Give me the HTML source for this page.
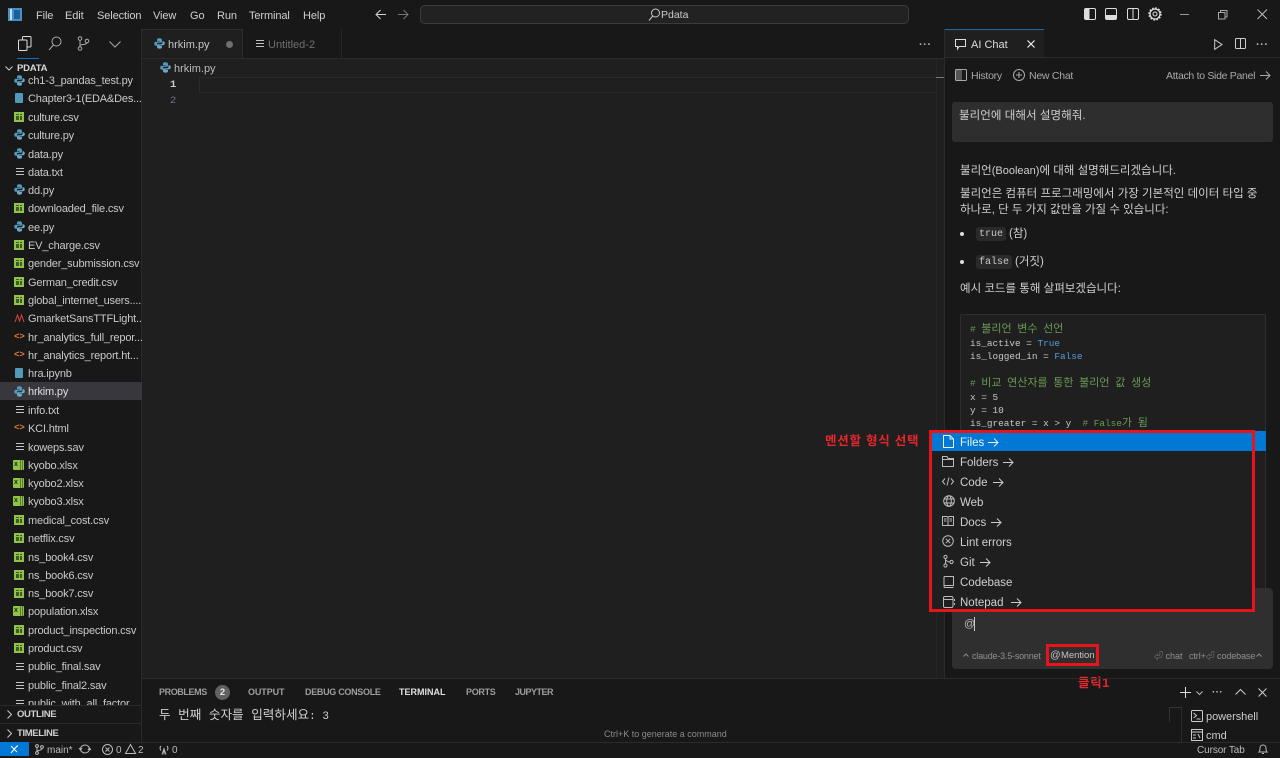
<!DOCTYPE html>
<html><head><meta charset="utf-8">
<style>
*{box-sizing:border-box}
html,body{margin:0;padding:0;width:1280px;height:756px;overflow:hidden;background:#181818;font-family:"Liberation Sans","Noto Sans CJK KR",sans-serif;color:#ccc;font-size:11px}
.a{position:absolute;white-space:nowrap;line-height:14px}
.b{position:absolute}
svg{position:absolute;overflow:visible;fill:none;stroke:#c8c8c8;stroke-width:1}
.f{position:absolute;left:28px;width:114px;font-size:11px;line-height:14px;color:#c9c9c9;white-space:nowrap;overflow:hidden;letter-spacing:-.17px;margin-top:1px}
.i{position:absolute;left:14px;width:11px;height:11px}
svg.pi{stroke:none;left:14px;width:11px;height:11px}
.csv{background:#3f5a22;border:2px solid #8fc34a;background-image:linear-gradient(#8fc34a,#8fc34a),linear-gradient(#8fc34a,#8fc34a);background-size:1px 100%,100% 1px;background-position:3px 0,0 1px;background-repeat:no-repeat;left:14px;width:10px;height:10px}
.txt{left:16px;width:8px;height:8px;background:repeating-linear-gradient(#c4c4c4 0 1px,transparent 1px 3px)}
.nb{left:15px;width:8px;height:10px;background:#519aba;border-radius:1px}
.html{color:#e37933;font:bold 9px "Liberation Mono",monospace;left:14px;line-height:10px;width:12px}
.xl{left:13px;width:11px;height:10px;background:linear-gradient(90deg,#8fc34a 0 7px,#5c7d30 7px 8px,#8fc34a 8px 9px,#5c7d30 9px 10px,#8fc34a 10px);border-radius:1px;color:#1c2a10;font:bold 7px/10px "Liberation Sans";padding-left:1px}
.m{position:absolute;top:9px;font-size:11px;line-height:14px;color:#cfcfcf;letter-spacing:-.1px}
.pn{position:absolute;top:686px;font-size:9px;font-weight:bold;line-height:13px;color:#9d9d9d;letter-spacing:-.25px}
.it{position:absolute;left:960px;font-size:11.5px;line-height:16px;color:#cfcfcf;white-space:nowrap;margin-top:1px}
.ar{position:absolute;width:11px;height:9px}
.code{font-family:"Liberation Mono","Noto Sans CJK KR",monospace;font-size:9.4px;line-height:13.45px;color:#c8c8c8;white-space:pre}
.code u{text-decoration:none;font-size:11px;line-height:0}
.ko{font-size:11.5px;color:#cfcfcf}
.sm{font-size:10.5px;color:#a8a8a8;letter-spacing:-.25px}
.ko small{font-size:11px}
</style></head><body>

<svg width="0" height="0" style="position:absolute"><defs>
<symbol id="py" viewBox="0 0 11 11"><path d="M5.400 .3C3.400 .3 3 1.100 3 2.100V3.300H5.600V3.800H1.900C.8 3.800 .2 4.600 .2 5.700S.8 7.800 1.900 7.800H3V6.300C3 5.400 3.700 4.800 4.500 4.800H6.800C7.600 4.800 8 4.200 8 3.500V2.100C8 1 7.200 .3 5.400 .3Z" fill="#519aba" stroke="none"/><path d="M5.600 10.700C7.600 10.700 8 9.900 8 8.900V7.700H5.400V7.200H9.100C10.200 7.200 10.800 6.400 10.800 5.300S10.200 3.200 9.100 3.200H8.500V4.700C8.500 5.600 7.800 6.200 7 6.200H4.200C3.400 6.200 3 6.800 3 7.500V8.900C3 10 3.800 10.700 5.600 10.700Z" fill="#6aa9c8" stroke="none"/></symbol>
</defs></svg>

<!-- title bar -->
<div class="b" style="left:0;top:0;width:1280px;height:29px;background:#181818"></div>
<div class="b" style="left:8px;top:8px;width:14px;height:13px;background:#4a90c8"></div>
<div class="b" style="left:10px;top:9px;width:2px;height:11px;background:#bfe0f5"></div>
<div class="b" style="left:14px;top:10px;width:6px;height:9px;background:#1d5f96"></div>
<div class="m" style="left:36px">File</div><div class="m" style="left:65px">Edit</div><div class="m" style="left:97px">Selection</div><div class="m" style="left:153px">View</div><div class="m" style="left:190px">Go</div><div class="m" style="left:217px">Run</div><div class="m" style="left:249px">Terminal</div><div class="m" style="left:303px">Help</div>
<svg style="left:375px;top:9px" width="12" height="11"><path d="M1 5.500H11M5.500 1L1 5.500L5.500 10" stroke="#d0d0d0"/></svg>
<svg style="left:397px;top:9px" width="12" height="11"><path d="M1 5.500H11M6.500 1L11 5.500L6.500 10" stroke="#777"/></svg>
<div class="b" style="left:420px;top:5px;width:489px;height:19px;background:#222;border:1px solid #3c3c3c;border-radius:5px"></div>
<svg style="left:648px;top:8px" width="12" height="13"><circle cx="7.500" cy="5" r="4"/><path d="M4.800 8L1 12.500"/></svg>
<div class="a" style="left:661px;top:8px;font-size:10.5px;color:#ccc">Pdata</div>
<svg style="left:1084px;top:8px" width="12" height="12"><rect x=".5" y=".5" width="11" height="11" rx="1.500" stroke="#ddd"/><rect x="1" y="1" width="4.500" height="10" fill="#ddd" stroke="none"/></svg>
<svg style="left:1105px;top:8px" width="12" height="12"><rect x=".5" y=".5" width="11" height="11" rx="1.500" stroke="#ddd"/><rect x="1" y="7" width="10" height="4" fill="#ddd" stroke="none"/></svg>
<svg style="left:1127px;top:8px" width="12" height="12"><path d="M6 1V11" stroke="#ddd"/><rect x=".5" y=".5" width="11" height="11" rx="1.500" stroke="#ddd"/></svg>
<svg style="left:1148px;top:7px" width="14" height="14"><circle cx="7" cy="7" r="2" stroke="#ddd"/><circle cx="7" cy="7" r="5" stroke="#ddd" stroke-width="1.300"/><circle cx="7" cy="7" r="6" stroke="#ddd" stroke-width="1.400" stroke-dasharray="1.600 1.550"/></svg>
<div class="b" style="left:1180px;top:14px;width:9px;height:1px;background:#999"></div>
<svg style="left:1218px;top:10px" width="10" height="10"><rect x=".5" y="2.500" width="6.500" height="6.500" stroke="#aaa"/><path d="M2.500 2.500V.5H9V7H7" stroke="#aaa"/></svg>
<svg style="left:1257px;top:9px" width="11" height="11"><path d="M.5.5L10 10M10 .5L.5 10" stroke="#bbb"/></svg>

<!-- activity / sidebar -->
<div class="b" style="left:0;top:29px;width:142px;height:713px;background:#181818;border-right:1px solid #2a2a2a"></div>
<svg style="left:18px;top:36px" width="14" height="15"><rect x="4.500" y=".5" width="8.500" height="10.500" rx="1" stroke="#ddd"/><rect x=".5" y="4" width="8.500" height="10.500" rx="1" stroke="#ddd" fill="#181818"/></svg>
<svg style="left:48px;top:36px" width="14" height="15"><circle cx="8.500" cy="5.500" r="4.500" stroke="#aaa"/><path d="M5.500 9L1 14" stroke="#aaa"/></svg>
<svg style="left:77px;top:36px" width="13" height="15"><circle cx="3" cy="2.500" r="1.800" stroke="#aaa"/><circle cx="3" cy="12.500" r="1.800" stroke="#aaa"/><circle cx="10" cy="5" r="1.800" stroke="#aaa"/><path d="M3 4.500V10.500M3 9C6 8 9 9 10 7" stroke="#aaa"/></svg>
<svg style="left:109px;top:41px" width="12" height="7"><path d="M.5 .5L6 6L11.500 .5" stroke="#aaa"/></svg>
<div class="b" style="left:17px;top:58px;width:22px;height:1px;background:#0e70c0"></div>
<svg style="left:5px;top:66px" width="8" height="5"><path d="M.5 .5L4 4L7.500 .5" stroke="#ccc"/></svg>

<div class="b" style="left:0;top:75px;width:142px;height:635px;overflow:hidden">
<div class="b" style="left:0;top:307px;width:142px;height:18px;background:#37373d"></div>
<svg class="pi" style="top:0px"><use href="#py"/></svg><div class="f" style="top:-2px">ch1-3_pandas_test.py</div>
<i class="i nb" style="top:18px"></i><div class="f" style="top:16px">Chapter3-1(EDA&amp;Des...</div>
<i class="i csv" style="top:37px"></i><div class="f" style="top:35px">culture.csv</div>
<svg class="pi" style="top:54px"><use href="#py"/></svg><div class="f" style="top:53px">culture.py</div>
<svg class="pi" style="top:73px"><use href="#py"/></svg><div class="f" style="top:72px">data.py</div>
<i class="i txt" style="top:93px"></i><div class="f" style="top:90px">data.txt</div>
<svg class="pi" style="top:109px"><use href="#py"/></svg><div class="f" style="top:108px">dd.py</div>
<i class="i csv" style="top:128px"></i><div class="f" style="top:126px">downloaded_file.csv</div>
<svg class="pi" style="top:146px"><use href="#py"/></svg><div class="f" style="top:145px">ee.py</div>
<i class="i csv" style="top:165px"></i><div class="f" style="top:163px">EV_charge.csv</div>
<i class="i csv" style="top:183px"></i><div class="f" style="top:181px">gender_submission.csv</div>
<i class="i csv" style="top:202px"></i><div class="f" style="top:200px">German_credit.csv</div>
<i class="i csv" style="top:220px"></i><div class="f" style="top:218px">global_internet_users....</div>
<svg style="left:14px;top:238px" width="11" height="10"><path d="M1 9L3.500 2L5.500 8L7.500 2L10 9" stroke="#d9443f"/></svg><div class="f" style="top:236px">GmarketSansTTFLight...</div>
<div class="i html" style="top:257px">&lt;&gt;</div><div class="f" style="top:255px">hr_analytics_full_repor...</div>
<div class="i html" style="top:275px">&lt;&gt;</div><div class="f" style="top:273px">hr_analytics_report.ht...</div>
<i class="i nb" style="top:293px"></i><div class="f" style="top:291px">hra.ipynb</div>
<svg class="pi" style="top:311px"><use href="#py"/></svg><div class="f" style="top:309px;color:#e0e0e0">hrkim.py</div>
<i class="i txt" style="top:331px"></i><div class="f" style="top:328px">info.txt</div>
<div class="i html" style="top:348px">&lt;&gt;</div><div class="f" style="top:346px">KCI.html</div>
<i class="i txt" style="top:368px"></i><div class="f" style="top:365px">koweps.sav</div>
<i class="i xl" style="top:385px">x</i><div class="f" style="top:383px">kyobo.xlsx</div>
<i class="i xl" style="top:403px">x</i><div class="f" style="top:401px">kyobo2.xlsx</div>
<i class="i xl" style="top:421px">x</i><div class="f" style="top:419px">kyobo3.xlsx</div>
<i class="i csv" style="top:440px"></i><div class="f" style="top:438px">medical_cost.csv</div>
<i class="i csv" style="top:458px"></i><div class="f" style="top:456px">netflix.csv</div>
<i class="i csv" style="top:477px"></i><div class="f" style="top:475px">ns_book4.csv</div>
<i class="i csv" style="top:495px"></i><div class="f" style="top:493px">ns_book6.csv</div>
<i class="i csv" style="top:513px"></i><div class="f" style="top:511px">ns_book7.csv</div>
<i class="i xl" style="top:531px">x</i><div class="f" style="top:529px">population.xlsx</div>
<i class="i csv" style="top:550px"></i><div class="f" style="top:548px">product_inspection.csv</div>
<i class="i csv" style="top:568px"></i><div class="f" style="top:566px">product.csv</div>
<i class="i txt" style="top:588px"></i><div class="f" style="top:584px">public_final.sav</div>
<i class="i txt" style="top:607px"></i><div class="f" style="top:603px">public_final2.sav</div>
<i class="i txt" style="top:625px"></i><div class="f" style="top:621px">public_with_all_factor</div>
</div>
<div class="b" style="left:0;top:59px;width:141px;height:16px;background:#181818"></div>
<div class="a" style="left:17px;top:62px;font-size:9.5px;font-weight:bold;color:#d8d8d8;letter-spacing:-.2px">PDATA</div>
<svg style="left:5px;top:66px" width="8" height="5"><path d="M.5 .5L4 4L7.500 .5" stroke="#ccc"/></svg>
<div class="b" style="left:0;top:705px;width:141px;height:37px;background:#181818"></div>
<div class="b" style="left:0;top:705px;width:142px;height:1px;background:#2b2b2b"></div>
<div class="b" style="left:0;top:723px;width:142px;height:1px;background:#2b2b2b"></div>
<svg style="left:7px;top:710px" width="5" height="9"><path d="M.5 .5L4.500 4.500L.5 8.500" stroke="#ccc"/></svg>
<div class="a" style="left:17px;top:708px;font-size:9.5px;font-weight:bold;color:#d0d0d0;letter-spacing:-.35px">OUTLINE</div>
<svg style="left:7px;top:729px" width="5" height="9"><path d="M.5 .5L4.500 4.500L.5 8.500" stroke="#ccc"/></svg>
<div class="a" style="left:17px;top:727px;font-size:9.5px;font-weight:bold;color:#d0d0d0;letter-spacing:-.35px">TIMELINE</div>

<!-- editor tabs -->
<div class="b" style="left:142px;top:29px;width:802px;height:30px;background:#181818;border-bottom:1px solid #2a2a2a"></div>
<div class="b" style="left:142px;top:29px;width:100px;height:29px;background:#1f1f1f;border-top:1px solid #2b2b2b"></div>
<svg class="pi" style="left:154px;top:38px"><use href="#py"/></svg>
<div class="a" style="left:168px;top:38px;font-size:11px;color:#c4c4c4">hrkim.py</div>
<div class="b" style="left:226px;top:41px;width:7px;height:7px;border-radius:50%;background:#707070"></div>
<div class="b" style="left:242px;top:29px;width:1px;height:29px;background:#2b2b2b"></div>
<i class="i txt" style="left:256px;top:40px"></i>
<div class="a" style="left:268px;top:38px;font-size:11px;color:#6f6f6f">Untitled-2</div>
<div class="b" style="left:341px;top:29px;width:1px;height:29px;background:#262626"></div>
<div class="a" style="left:919px;top:38px;font-size:11px;font-weight:bold;color:#b0b0b0;letter-spacing:.5px">···</div>

<!-- editor -->
<div class="b" style="left:142px;top:59px;width:802px;height:619px;background:#1f1f1f"></div>
<svg class="pi" style="left:160px;top:62px"><use href="#py"/></svg>
<div class="a" style="left:174px;top:62px;font-size:11px;color:#bbb">hrkim.py</div>
<div class="b" style="left:199px;top:77px;width:737px;height:16px;border:1px solid #2a2a2a;border-right:0"></div>
<div class="a" style="left:170px;top:78px;font:bold 10.5px/14px 'Liberation Mono',monospace;color:#ccc">1</div>
<div class="a" style="left:170px;top:94px;font:10.5px/14px 'Liberation Mono',monospace;color:#6e7681">2</div>
<div class="b" style="left:936px;top:59px;width:1px;height:619px;background:#252525"></div>
<div class="b" style="left:936px;top:77px;width:8px;height:1px;background:#777"></div>

<!-- panel -->
<div class="b" style="left:142px;top:678px;width:802px;height:64px;background:#181818;border-top:1px solid #2b2b2b"></div>
<div class="pn" style="left:159px;letter-spacing:-.4px">PROBLEMS</div>
<div class="b" style="left:215px;top:685px;width:15px;height:15px;border-radius:50%;background:#616161;color:#e6e6e6;font:bold 9.5px/15px 'Liberation Sans';text-align:center">2</div>
<div class="pn" style="left:248px;letter-spacing:-.1px">OUTPUT</div>
<div class="pn" style="left:305px;letter-spacing:-.3px">DEBUG CONSOLE</div>
<div class="pn" style="left:399px;color:#e0e0e0;letter-spacing:0">TERMINAL</div>
<div class="pn" style="left:466px;letter-spacing:-.3px">PORTS</div>
<div class="pn" style="left:515px;letter-spacing:-.5px">JUPYTER</div>
<div class="a" style="left:159px;top:709px;font:12.6px/14px 'Liberation Mono','Noto Sans CJK KR',monospace;color:#cfcfcf">두 번째 숫자를 입력하세요<span style="font-size:11px">: 3</span></div>
<div class="a" style="left:604px;top:727px;font-size:9px;color:#8a8a8a">Ctrl+K to generate a command</div>
<div class="b" style="left:1169px;top:707px;width:12px;height:15px;border:1px solid #333;border-right:0;border-bottom:0"></div>

<!-- right chat -->
<div class="b" style="left:944px;top:29px;width:336px;height:649px;background:#181818;border-left:1px solid #2b2b2b"></div>
<div class="b" style="left:945px;top:29px;width:99px;height:29px;background:#1f1f1f;border-top:1px solid #1b6ba8"></div>
<div class="b" style="left:945px;top:57px;width:335px;height:1px;background:#2b2b2b"></div>
<svg style="left:955px;top:39px" width="11" height="11"><path d="M.5 .5H10.500V7.500H4L2.500 10V7.500H.5Z" stroke="#ddd"/></svg>
<div class="a" style="left:971px;top:38px;font-size:11px;color:#ddd">AI Chat</div>
<svg style="left:1027px;top:40px" width="8" height="8"><path d="M.5.5L7.500 7.500M7.500.5L.5 7.500" stroke="#eee" stroke-width="1.200"/></svg>
<svg style="left:1214px;top:39px" width="9" height="11"><path d="M.7.7L8 5.500L.7 10.300Z" stroke="#ccc"/></svg>
<svg style="left:1235px;top:38px" width="11" height="11"><rect x=".5" y=".5" width="10" height="10" rx="1" stroke="#ccc"/><path d="M5.500 .5V10.500" stroke="#ccc"/></svg>
<div class="a" style="left:1256px;top:38px;font-size:11px;font-weight:bold;color:#b8b8b8;letter-spacing:.5px">···</div>

<svg style="left:955px;top:69px" width="12" height="12"><rect x=".5" y=".5" width="11" height="11" rx="1" stroke="#aaa"/><rect x="1" y="1" width="6" height="10" fill="#555" stroke="none"/></svg>
<div class="a sm" style="left:971px;top:69px">History</div>
<svg style="left:1013px;top:69px" width="12" height="12"><circle cx="6" cy="6" r="5.500" stroke="#aaa"/><path d="M6 3V9M3 6H9" stroke="#aaa"/></svg>
<div class="a sm" style="left:1029px;top:69px">New Chat</div>
<div class="a sm" style="left:1166px;top:69px;letter-spacing:-.3px">Attach to Side Panel</div>
<svg style="left:1260px;top:71px" width="11" height="9"><path d="M0 4.500H10M6 .5L10 4.500L6 8.500" stroke="#aaa"/></svg>

<div class="b" style="left:952px;top:102px;width:321px;height:40px;background:#2e2e2e;border-radius:3px"></div>
<div class="a ko" style="left:959px;top:109px;letter-spacing:.05px">불리언에 대해서 설명해줘.</div>
<div class="a ko" style="left:960px;top:164px">불리언<small>(Boolean)</small>에 대해 설명해드리겠습니다.</div>
<div class="a ko" style="left:960px;top:187px">불리언은 컴퓨터 프로그래밍에서 가장 기본적인 데이터 타입 중</div>
<div class="a ko" style="left:960px;top:203px">하나로, 단 두 가지 값만을 가질 수 있습니다:</div>
<div class="b" style="left:960px;top:232px;width:4px;height:4px;border-radius:50%;background:#ddd"></div>
<div class="b" style="left:976px;top:227px;width:30px;height:14px;background:#2a2a2a;border-radius:3px"></div>
<div class="a code" style="left:979px;top:227.500px;font-size:10px;line-height:14px">true</div>
<div class="a ko" style="left:1009px;top:227px">(참)</div>
<div class="b" style="left:960px;top:260px;width:4px;height:4px;border-radius:50%;background:#ddd"></div>
<div class="b" style="left:976px;top:255px;width:36px;height:14px;background:#2a2a2a;border-radius:3px"></div>
<div class="a code" style="left:979px;top:255.500px;font-size:10px;line-height:14px">false</div>
<div class="a ko" style="left:1015px;top:255px">(거짓)</div>
<div class="a ko" style="left:960px;top:282px">예시 코드를 통해 살펴보겠습니다:</div>

<div class="b" style="left:960px;top:314px;width:306px;height:300px;background:#1f1f1f;border:1px solid #2e2e2e;border-radius:2px"></div>
<div class="a code" style="left:970px;top:323.300px;line-height:13.450px"><span style="color:#6a9955"># <u>불리언</u> <u>변수</u> <u>선언</u></span>
is_active = <span style="color:#569cd6">True</span>
is_logged_in = <span style="color:#569cd6">False</span>

<span style="color:#6a9955"># <u>비교</u> <u>연산자를</u> <u>통한</u> <u>불리언</u> <u>값</u> <u>생성</u></span>
x = 5
y = 10
is_greater = x &gt; y  <span style="color:#6a9955"># False<u>가</u> <u>됨</u></span></div>

<!-- input box -->
<div class="b" style="left:952px;top:588px;width:321px;height:81px;background:#2f2f2f;border-radius:4px"></div>
<div class="a" style="left:964px;top:617px;font-size:11px;color:#bbb">@</div>
<div class="b" style="left:974px;top:617px;width:1px;height:14px;background:#ccc"></div>
<svg style="left:963px;top:653px" width="6" height="4"><path d="M.5 3.500L3 1L5.500 3.500" stroke="#888"/></svg>
<div class="a" style="left:972px;top:649px;font-size:9px;color:#8f8f8f;letter-spacing:-.2px">claude-3.5-sonnet</div>
<div class="a" style="left:1050px;top:648px;font-size:10.5px;color:#c4c4c4">@</div>
<div class="a" style="left:1061px;top:649px;font-size:9.5px;color:#c4c4c4;letter-spacing:-.05px">Mention</div>
<div class="a" style="left:1154px;top:649px;font-size:9px;color:#8f8f8f">⏎ chat</div>
<div class="a" style="left:1189px;top:649px;font-size:9px;color:#8f8f8f;letter-spacing:-.1px">ctrl+⏎ codebase</div>
<svg style="left:1256px;top:653px" width="6" height="4"><path d="M.5 3.500L3 1L5.500 3.500" stroke="#888"/></svg>

<!-- popup -->
<div class="b" style="left:932px;top:431px;width:322px;height:180px;background:#1f1f1f"></div>
<div class="b" style="left:932px;top:431px;width:334px;height:20px;background:#0078d4"></div>

<svg style="left:943px;top:435px" width="11" height="13"><path d="M.5 .5H7L10.500 4V12.500H.5ZM7 .5V4H10.500" stroke="#eee"/></svg>
<div class="it" style="top:434px;color:#f2f2f2">Files</div>
<svg class="ar" style="left:988px;top:438px"><path d="M0 4.500H10M6 .5L10 4.500L6 8.500" stroke="#eee"/></svg>

<svg style="left:942px;top:456px" width="12" height="11"><path d="M.5 .5H5L6 2.500H11.500V10.500H.5ZM.5 3.500H11.500" stroke="#bbb"/></svg>
<div class="it" style="top:454px">Folders</div>
<svg class="ar" style="left:1003px;top:458px"><path d="M0 4.500H10M6 .5L10 4.500L6 8.500" stroke="#ccc"/></svg>

<svg style="left:942px;top:477px" width="12" height="9"><path d="M3 1.500L.5 4.500L3 7.500M9 1.500L11.500 4.500L9 7.500M7 .5L5 8.500" stroke="#bbb"/></svg>
<div class="it" style="top:474px">Code</div>
<svg class="ar" style="left:993px;top:478px"><path d="M0 4.500H10M6 .5L10 4.500L6 8.500" stroke="#ccc"/></svg>

<svg style="left:943px;top:495px" width="12" height="12"><circle cx="6" cy="6" r="5.300" stroke="#bbb"/><ellipse cx="6" cy="6" rx="2.300" ry="5.300" stroke="#bbb"/><path d="M.7 4H11.300M.7 8H11.300" stroke="#bbb"/></svg>
<div class="it" style="top:494px">Web</div>

<svg style="left:942px;top:516px" width="12" height="10"><path d="M.5 .5H5L6 1.500L7 .5H11.500V9.500H.5ZM6 1.500V9.500M2 3H4.500M2 5H4.500M7.500 3H10M7.500 5H10" stroke="#bbb"/></svg>
<div class="it" style="top:514px">Docs</div>
<svg class="ar" style="left:991px;top:518px"><path d="M0 4.500H10M6 .5L10 4.500L6 8.500" stroke="#ccc"/></svg>

<svg style="left:942px;top:535px" width="12" height="12"><circle cx="6" cy="6" r="5.300" stroke="#bbb"/><path d="M3.800 3.800L8.200 8.200M8.200 3.800L3.800 8.200" stroke="#bbb"/></svg>
<div class="it" style="top:534px">Lint errors</div>

<svg style="left:943px;top:555px" width="11" height="13"><circle cx="2.500" cy="2" r="1.600" stroke="#bbb"/><circle cx="2.500" cy="10.500" r="1.600" stroke="#bbb"/><circle cx="8.500" cy="7" r="1.600" stroke="#bbb"/><path d="M2.500 3.600V8.900M3 5C4 6.500 5.500 7 6.900 7" stroke="#bbb"/></svg>
<div class="it" style="top:554px">Git</div>
<svg class="ar" style="left:980px;top:558px"><path d="M0 4.500H10M6 .5L10 4.500L6 8.500" stroke="#ccc"/></svg>

<svg style="left:943px;top:576px" width="11" height="12"><path d="M1 9.500V1.500C1 1 1.500 .5 2 .5H10.500V9.500H2C1.500 9.500 1 10 1 10.500S1.500 11.500 2 11.500H10.500" stroke="#bbb"/></svg>
<div class="it" style="top:574px">Codebase</div>

<svg style="left:943px;top:596px" width="12" height="12"><rect x=".5" y=".5" width="9.500" height="11" rx="1.500" stroke="#bbb"/><path d="M.5 3.500H10M11.500 3V5M11.500 7V9" stroke="#bbb"/></svg>
<div class="it" style="top:594px">Notepad</div>
<svg class="ar" style="left:1011px;top:598px"><path d="M0 4.500H10M6 .5L10 4.500L6 8.500" stroke="#ccc"/></svg>

<!-- annotations -->
<div class="b" style="left:929px;top:430px;width:326px;height:182px;border:3px solid #e8141c"></div>
<div class="b" style="left:1046px;top:644px;width:53px;height:22px;border:3px solid #e8141c"></div>
<div class="a" style="left:825px;top:434px;font-size:12.5px;font-weight:bold;color:#e8262c;letter-spacing:.75px">멘션할 형식 선택</div>
<div class="a" style="left:1078px;top:676px;font-size:12.5px;font-weight:bold;color:#e8262c;letter-spacing:.6px">클릭1</div>

<!-- terminal actions -->
<div class="b" style="left:1189px;top:678px;width:91px;height:64px;background:#181818"></div>
<div class="b" style="left:944px;top:678px;width:336px;height:1px;background:#2b2b2b"></div>
<svg style="left:1180px;top:687px" width="11" height="11"><path d="M5.500 0V11M0 5.500H11" stroke="#ddd"/></svg>
<svg style="left:1196px;top:691px" width="7" height="4"><path d="M.5 .5L3.500 3.500L6.500 .5" stroke="#bbb"/></svg>
<div class="a" style="left:1212px;top:686px;font-size:10px;font-weight:bold;color:#bbb;letter-spacing:.3px">···</div>
<svg style="left:1235px;top:689px" width="11" height="6"><path d="M.5 5.500L5.500 .5L10.500 5.500" stroke="#ccc"/></svg>
<svg style="left:1258px;top:688px" width="9" height="9"><path d="M.5.5L8.500 8.500M8.500.5L.5 8.500" stroke="#ccc"/></svg>
<div class="b" style="left:1181px;top:706px;width:1px;height:36px;background:#2b2b2b"></div>
<svg style="left:1191px;top:710px" width="12" height="12"><rect x=".5" y=".5" width="11" height="11" rx="1" stroke="#ccc"/><path d="M2.500 3L5.500 5.500L2.500 8M5.500 9H9.500" stroke="#ccc"/></svg>
<div class="a" style="left:1206px;top:710px;font-size:11px;color:#ccc;letter-spacing:-.05px">powershell</div>
<svg style="left:1191px;top:729px" width="12" height="12"><rect x=".5" y=".5" width="11" height="11" stroke="#ccc"/><path d="M.5 3H11.500" stroke="#ccc"/><path d="M2 6H5M2 9H5M7 5L9 9" stroke="#ccc"/></svg>
<div class="a" style="left:1206px;top:729px;font-size:11px;color:#ccc">cmd</div>

<!-- status bar -->
<div class="b" style="left:0;top:742px;width:1280px;height:14px;background:#181818;border-top:1px solid #2b2b2b"></div>
<div class="b" style="left:0;top:742px;width:29px;height:14px;background:#0078d4"></div>
<svg style="left:10px;top:745px" width="9" height="9"><path d="M1 1L7 7M7 1L1 8M4 4L8 .5" stroke="#fff"/></svg>
<svg style="left:35px;top:744px" width="9" height="11"><circle cx="2" cy="2" r="1.400" stroke="#bbb"/><circle cx="2" cy="9" r="1.400" stroke="#bbb"/><circle cx="7" cy="3" r="1.400" stroke="#bbb"/><path d="M2 3.500V7.500M2 7C4 6 6.500 6.500 7 4.500" stroke="#bbb"/></svg>
<div class="a" style="left:47px;top:744px;font-size:10px;line-height:14px;color:#bbb">main*</div>
<svg style="left:79px;top:744px" width="12" height="10"><path d="M1.500 5C1.500 3 3.500 1 6 1C8 1 9.500 2 10.500 4M10.500 5C10.500 7 8.500 9 6 9C4 9 2.500 8 1.500 6M0 4L1.500 6L3 4M9 6L10.500 4L12 6" stroke="#bbb"/></svg>
<svg style="left:102px;top:744px" width="11" height="11"><circle cx="5.500" cy="5.500" r="5" stroke="#bbb"/><path d="M3.500 3.500L7.500 7.500M7.500 3.500L3.500 7.500" stroke="#bbb"/></svg>
<div class="a" style="left:116px;top:744px;font-size:10px;color:#bbb">0</div>
<svg style="left:125px;top:744px" width="11" height="10"><path d="M5.500 .5L10.500 9.500H.5Z" stroke="#bbb"/></svg>
<div class="a" style="left:138px;top:744px;font-size:10px;color:#bbb">2</div>
<svg style="left:159px;top:745px" width="10" height="10"><path d="M5 3V9.500M3 9.500L5 4L7 9.500M2 1C.7 2.500.7 4 2 5.500M8 1C9.300 2.500 9.300 4 8 5.500" stroke="#bbb"/></svg>
<div class="a" style="left:172px;top:744px;font-size:10px;color:#bbb">0</div>
<div class="a" style="left:1197px;top:744px;font-size:10px;color:#bbb;letter-spacing:-.1px">Cursor Tab</div>
<svg style="left:1258px;top:744px" width="10" height="11"><path d="M1 8C2 7 2 5.500 2 4C2 2 3.500 1 5 1S8 2 8 4C8 5.500 8 7 9 8ZM4 9.500H6" stroke="#bbb"/></svg>

</body></html>
